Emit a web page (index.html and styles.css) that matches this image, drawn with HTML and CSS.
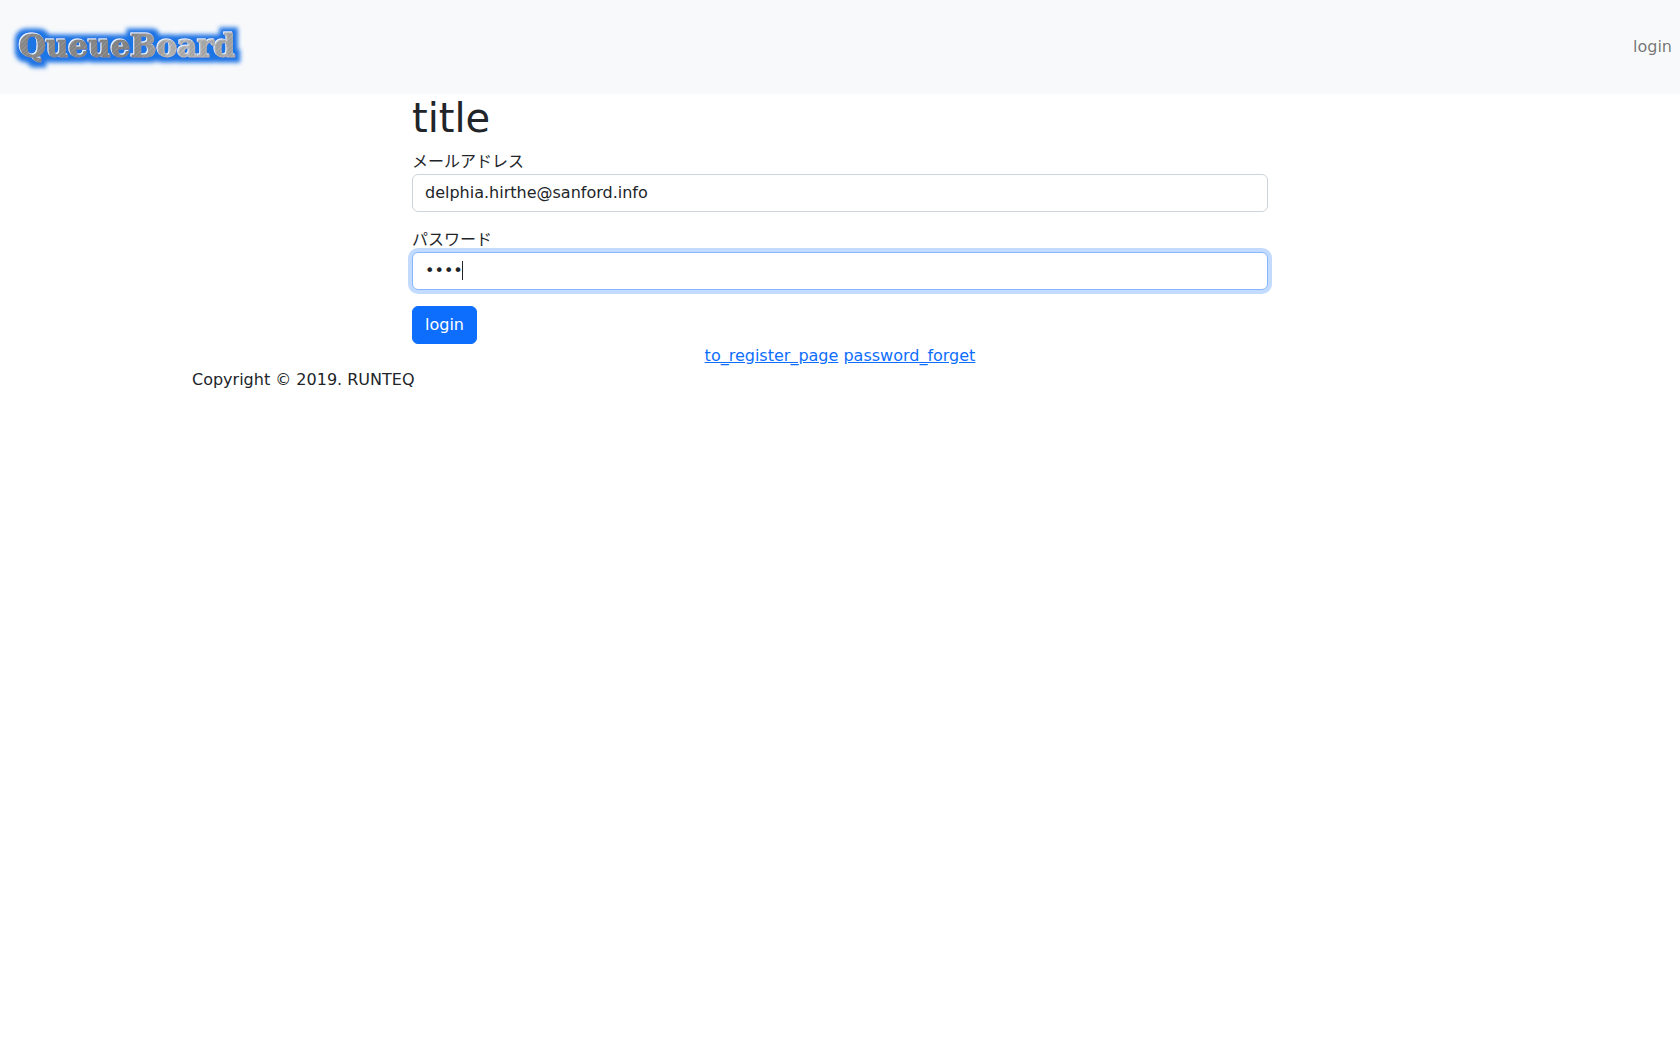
FILE: index.html
```html
<!DOCTYPE html>
<html lang="ja">
<head>
  <meta charset="utf-8">
  <meta name="viewport" content="width=device-width, initial-scale=1">
  <title>QueueBoard</title>
  <link rel="stylesheet" href="styles.css">
</head>
<body>
  <header>
    <nav class="navbar">
      <a class="navbar-brand" href="#">
        <svg class="logo" width="240" height="68" viewBox="0 0 240 68" role="img" aria-label="QueueBoard">
          <defs>
            <pattern id="brushed" width="6" height="6" patternUnits="userSpaceOnUse" patternTransform="rotate(45)">
              <rect width="6" height="6" fill="#8b8b8b"/>
              <rect width="1" height="6" fill="#a2a2a2"/>
              <rect x="3" width="1" height="6" fill="#979797"/>
            </pattern>
            <linearGradient id="sheen">
              <stop offset="0" stop-color="#555" stop-opacity=".1"/>
              <stop offset=".5" stop-color="#555" stop-opacity=".2"/>
              <stop offset=".7" stop-color="#fff" stop-opacity=".25"/>
              <stop offset="1" stop-color="#fff" stop-opacity=".15"/>
            </linearGradient>
            <filter id="glow" x="-10%" y="-50%" width="120%" height="200%">
              <feMorphology in="SourceAlpha" operator="dilate" radius="5" result="wide"/>
              <feGaussianBlur in="wide" stdDeviation="2" result="soft"/>
              <feFlood flood-color="#1f74e4"/>
              <feComposite in2="soft" operator="in" result="halo"/>
              <feOffset in="SourceAlpha" dx="-1" dy="-1" result="edge"/>
              <feFlood flood-color="#e4f2ff"/>
              <feComposite in2="edge" operator="in" result="bevel"/>
              <feMerge>
                <feMergeNode in="halo"/>
                <feMergeNode in="bevel"/>
                <feMergeNode in="SourceGraphic"/>
              </feMerge>
            </filter>
          </defs>
          <g filter="url(#glow)">
            <text class="logo-text" x="11" y="44" fill="url(#brushed)" stroke="url(#brushed)">QueueBoard</text>
            <text class="logo-text" x="11" y="44" fill="url(#sheen)" stroke="url(#sheen)" aria-hidden="true">QueueBoard</text>
          </g>
        </svg>
      </a>
      <a class="nav-link" href="#">login</a>
    </nav>
  </header>
  <main class="container">
    <div class="column">
      <h1>title</h1>
      <form>
        <div class="form-group">
          <label for="email">メールアドレス</label>
          <input class="form-control" type="email" id="email" value="delphia.hirthe@sanford.info">
        </div>
        <div class="form-group">
          <label for="password">パスワード</label>
          <div class="field">
            <input class="form-control" type="password" id="password" value="1234" autofocus>
            <span class="caret"></span>
          </div>
        </div>
        <button class="btn" type="submit">login</button>
      </form>
      <div class="links">
        <a href="#">to_register_page</a>
        <a href="#">password_forget</a>
      </div>
    </div>
  </main>
  <footer class="container">
    <p class="copyright">Copyright © 2019. RUNTEQ</p>
  </footer>
  <script src="focus.js"></script>
</body>
</html>
```
FILE: styles.css
```css
*,
*::before,
*::after {
  box-sizing: border-box;
}

body {
  margin: 0;
  font-family: "DejaVu Sans", "Noto Sans CJK JP", sans-serif;
  font-size: 16px;
  line-height: 24px;
  color: #212529;
  background: #fff;
}

.navbar {
  display: flex;
  align-items: center;
  justify-content: space-between;
  padding: 13px 8px;
  background: #f8f9fb;
}

.navbar-brand,
.logo {
  display: block;
}

.logo-text {
  font-family: "DejaVu Serif", serif;
  font-size: 31px;
  font-weight: 700;
  stroke-width: 1px;
}

.nav-link {
  color: rgba(0, 0, 0, 0.55);
  text-decoration: none;
}

.container {
  width: 100%;
  max-width: 1320px;
  margin: 0 auto;
  padding: 0 12px;
}

.column {
  max-width: 856px;
  margin: 0 auto;
}

h1 {
  margin: 0 0 8px;
  font-size: 40px;
  font-weight: 500;
  line-height: 48px;
}

.form-group {
  margin-bottom: 16px;
}

label {
  display: block;
  height: 24px;
}

.form-control {
  display: block;
  width: 100%;
  height: 38px;
  padding: 5px 12px 7px;
  border: 1px solid #ced4da;
  border-radius: 6px;
  font: inherit;
  color: inherit;
  background: #fff;
}

.form-control:focus {
  border-color: #86b7fe;
  outline: 0;
  box-shadow: 0 0 0 4px rgba(13, 110, 253, 0.25);
}

.field {
  position: relative;
}

.field .form-control {
  caret-color: transparent;
}

.caret {
  display: none;
  position: absolute;
  top: 9px;
  left: 50px;
  width: 1px;
  height: 19px;
  background: #212529;
  pointer-events: none;
}

.form-control:focus + .caret {
  display: block;
}

.btn {
  display: block;
  padding: 6px 12px;
  border: 1px solid #0d6efd;
  border-radius: 6px;
  font: inherit;
  color: #fff;
  background: #0d6efd;
  cursor: pointer;
}

.links {
  text-align: center;
}

.links a {
  color: #0d6efd;
}

.copyright {
  margin: 0;
}
```
FILE: focus.js
```js
// Put the caret after the last character of the password.
const password = document.getElementById("password");
password.focus();
password.setSelectionRange(password.value.length, password.value.length);
```
